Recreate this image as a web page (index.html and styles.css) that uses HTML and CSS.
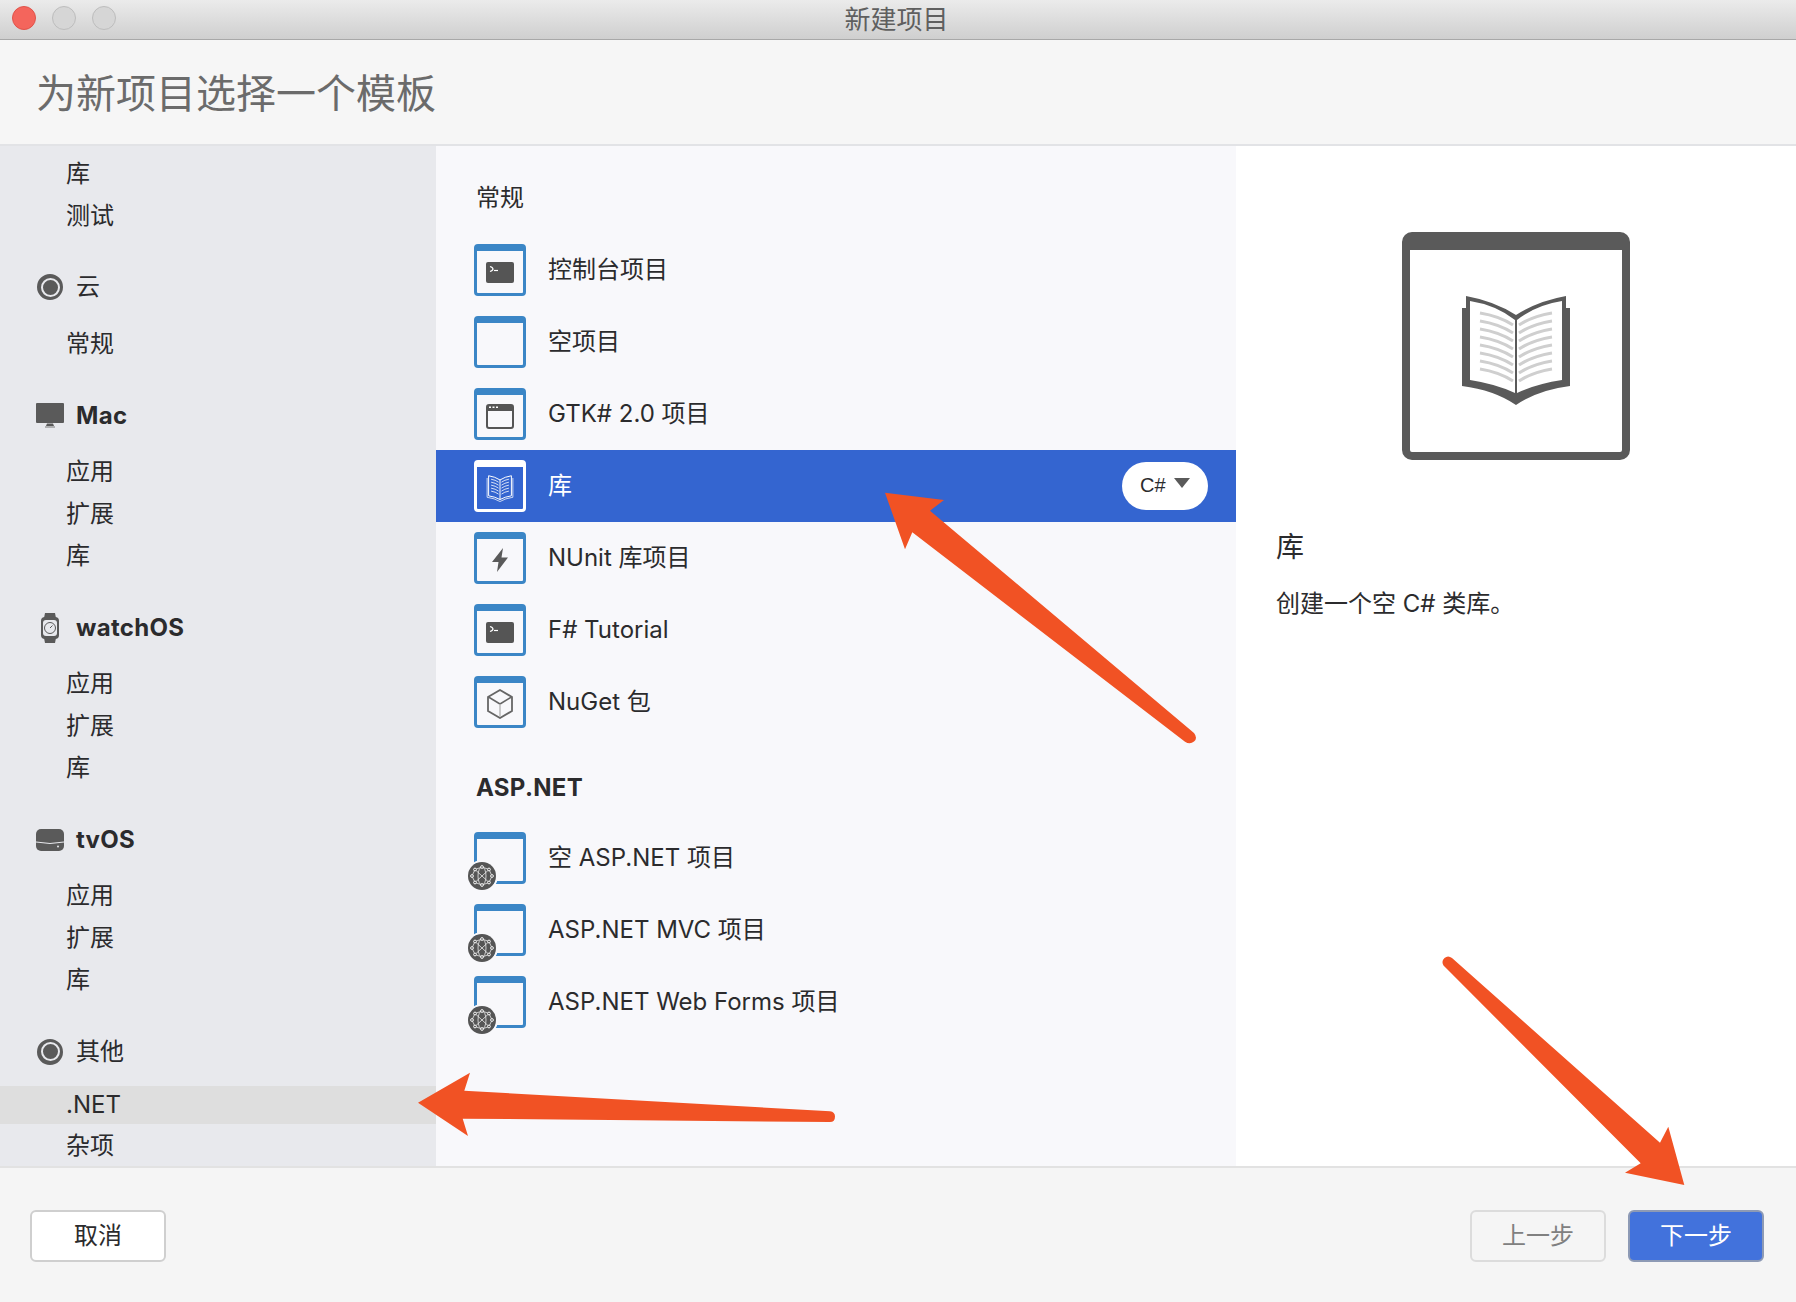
FILE: index.html
```html
<!DOCTYPE html>
<html lang="zh-CN">
   <head>
      <meta http-equiv="Content-Type" content="text/html;charset=utf-8" />
      <title>新建项目</title>
      <link rel="stylesheet" href="styles.css">
   </head>
   <body>
      <div class="titlebar">
         <div class="lights">
            <span class="light red"></span>
            <span class="light"></span>
            <span class="light"></span>
         </div>
         <div class="wintitle">新建项目</div>
      </div>
      <header class="head">为新项目选择一个模板</header>

      <main class="main">
         <nav class="side">
            <div class="items first">
               <div class="item">库</div>
               <div class="item">测试</div>
            </div>

            <div class="cat"><span class="caticon"><span class="ring"></span></span>云</div>
            <div class="items cloud">
               <div class="item">常规</div>
            </div>

            <div class="cat bold">
               <span class="caticon">
                  <svg width="28" height="25" viewBox="0 0 28 25"><path d="M1 0H27a1 1 0 0 1 1 1V19a1 1 0 0 1-1 1H1a1 1 0 0 1-1-1V1a1 1 0 0 1 1-1Z" fill="#5a5a5a"/><path d="M11 20.500H17L18 23H10Z" fill="#5a5a5a"/><path d="M9 23.500H19V24.500H9Z" fill="#777"/></svg>
               </span>Mac
            </div>
            <div class="items">
               <div class="item">应用</div>
               <div class="item">扩展</div>
               <div class="item">库</div>
            </div>

            <div class="cat bold">
               <span class="caticon">
                  <svg width="20" height="30" viewBox="0 0 20 30"><path d="M5 0H15L16 5H4ZM4 25H16L15 30H5Z" fill="#5a5a5a"/><rect x="1" y="4" width="18" height="22" rx="4" fill="#5a5a5a"/><rect x="3" y="7" width="14" height="16" rx="3" fill="#e8e9ed"/><circle cx="10" cy="15" r="5.500" fill="none" stroke="#5a5a5a"/><path d="M10 15L12.500 12.500" stroke="#5a5a5a"/></svg>
               </span>watchOS
            </div>
            <div class="items">
               <div class="item">应用</div>
               <div class="item">扩展</div>
               <div class="item">库</div>
            </div>

            <div class="cat bold">
               <span class="caticon">
                  <svg width="28" height="22" viewBox="0 0 28 22"><rect width="28" height="22" rx="5" fill="#5a5a5a"/><path d="M0 13Q14 16 28 13" fill="none" stroke="#e8e9ed"/><circle cx="22" cy="17.500" r="1" fill="#e8e9ed"/></svg>
               </span>tvOS
            </div>
            <div class="items">
               <div class="item">应用</div>
               <div class="item">扩展</div>
               <div class="item">库</div>
            </div>

            <div class="cat"><span class="caticon"><span class="ring"></span></span>其他</div>
            <div class="items tight">
               <div class="item current">.NET</div>
               <div class="item nogap">杂项</div>
            </div>
         </nav>

         <section class="list">
            <h3 class="listhead">常规</h3>
            <div class="row">
               <span class="tile"><span class="term"><svg width="28" height="21" viewBox="0 0 28 21"><path d="M4 4.500Q7 5.500 7 7T4 9.500" fill="none" stroke="#fff" stroke-width="1.200"/><path d="M8 8.500H12" stroke="#fff" stroke-width="1.200"/></svg></span></span>
               控制台项目
            </div>
            <div class="row"><span class="tile"></span>空项目</div>
            <div class="row">
               <span class="tile">
                  <svg width="28" height="25" viewBox="0 0 28 25"><rect x="1" y="1" width="26" height="23" rx="2" fill="none" stroke="#555" stroke-width="2"/><path d="M1 3a2 2 0 0 1 2-2H25a2 2 0 0 1 2 2V7H1Z" fill="#555"/><path d="M3 3.200H5M6.500 3.200H8.500M10 3.200H12" stroke="#fff" stroke-width="1.500"/></svg>
               </span>
               GTK# 2.0 项目
            </div>
            <div class="row selected">
               <span class="tile">
                  <svg width="28" height="27" viewBox="0 0 108 109" fill="none" stroke="#fff"><path stroke-width="3" d="M2 12V90Q32 94 54 107Q76 94 106 90V12"/><path stroke-width="4" d="M8 3Q34 7 54 20Q74 7 100 3V84Q74 88 54 99Q34 88 8 84ZM54 20V99"/><path stroke-width="4" d="M18 17q18 3 30 12M18 29q18 3 30 12M18 41q18 3 30 12M18 53q18 3 30 12M18 65q18 3 30 12M90 17q-18 3-30 12M90 29q-18 3-30 12M90 41q-18 3-30 12M90 53q-18 3-30 12M90 65q-18 3-30 12" opacity=".8"/></svg>
               </span>
               库
               <span class="pill">C#<span class="caret"></span></span>
            </div>
            <div class="row">
               <span class="tile">
                  <svg width="16" height="24" viewBox="0 0 16 24"><path d="M11 0L0 14H6.500L5 24L16 9.500H9.500Z" fill="#5a5a5a"/></svg>
               </span>
               NUnit 库项目
            </div>
            <div class="row">
               <span class="tile"><span class="term"><svg width="28" height="21" viewBox="0 0 28 21"><path d="M4 4.500Q7 5.500 7 7T4 9.500" fill="none" stroke="#fff" stroke-width="1.200"/><path d="M8 8.500H12" stroke="#fff" stroke-width="1.200"/></svg></span></span>
               F# Tutorial
            </div>
            <div class="row">
               <span class="tile">
                  <svg width="26" height="30" viewBox="0 0 26 30" fill="none"><path d="M13 1L25 8V22L13 29L1 22V8Z" stroke="#666" stroke-width="1.800"/><path d="M1.500 8L13 15L24.500 8" stroke="#666" stroke-width="1.500"/><path d="M13 15V28" stroke="#bbb" stroke-width="1.500"/></svg>
               </span>
               NuGet 包
            </div>

            <h3 class="listhead second bold">ASP.NET</h3>
            <div class="row">
               <span class="tile"><span class="badge"><svg width="28" height="28" viewBox="0 0 28 28"><use href="#net"/></svg></span></span>
               空 ASP.NET 项目
            </div>
            <div class="row">
               <span class="tile"><span class="badge"><svg width="28" height="28" viewBox="0 0 28 28"><use href="#net"/></svg></span></span>
               ASP.NET MVC 项目
            </div>
            <div class="row">
               <span class="tile"><span class="badge"><svg width="28" height="28" viewBox="0 0 28 28"><use href="#net"/></svg></span></span>
               ASP.NET Web Forms 项目
            </div>
         </section>

         <aside class="detail">
            <div class="preview">
               <svg width="108" height="109" viewBox="0 0 108 109">
                  <path fill="#5a5a5a" d="M0 12H4V0Q32 5 54 19Q76 5 104 0V12H108V90Q76 94 54 109Q32 94 0 90Z"/>
                  <path fill="#fff" d="M8 5Q34 9 53 24V97Q34 88 8 84Z"/>
                  <path fill="#fff" d="M100 5Q74 9 55 24V97Q74 88 100 84Z"/>
                  <path fill="none" stroke="#cfcfcf" stroke-width="3" d="M18 17q19 3 33 12M18 25q19 3 33 12M18 33q19 3 33 12M18 41q19 3 33 12M18 49q19 3 33 12M18 57q19 3 33 12M18 65q19 3 33 12M18 73q19 3 33 12"/>
                  <path fill="none" stroke="#cfcfcf" stroke-width="3" d="M90 17q-19 3-33 12M90 25q-19 3-33 12M90 33q-19 3-33 12M90 41q-19 3-33 12M90 49q-19 3-33 12M90 57q-19 3-33 12M90 65q-19 3-33 12M90 73q-19 3-33 12"/>
               </svg>
            </div>
            <div class="dtitle">库</div>
            <div class="ddesc">创建一个空 C# 类库。</div>
         </aside>
      </main>

      <footer class="foot">
         <button class="btn">取消</button>
         <div class="navbtns">
            <button class="btn off">上一步</button>
            <button class="btn primary">下一步</button>
         </div>
      </footer>

      <svg class="marks" width="1796" height="1302" viewBox="0 0 1796 1302">
         <defs>
            <g id="net" fill="none" stroke="#fff" stroke-width=".7">
               <circle cx="14" cy="14" r="14" fill="#555" stroke="none"/>
               <path d="M14 5L21 7.500L24 14L21 20.500L14 23L7 20.500L4 14L7 7.500Z"/>
               <ellipse cx="14" cy="14" rx="4" ry="9"/>
               <path d="M7 7.500Q14 14 21 20.500M21 7.500Q14 14 7 20.500"/>
               <g fill="#555" stroke-width=".9">
                  <circle cx="14" cy="5" r="1.400"/><circle cx="21" cy="7.500" r="1.400"/><circle cx="24" cy="14" r="1.400"/><circle cx="21" cy="20.500" r="1.400"/>
                  <circle cx="14" cy="23" r="1.400"/><circle cx="7" cy="20.500" r="1.400"/><circle cx="4" cy="14" r="1.400"/><circle cx="7" cy="7.500" r="1.400"/>
               </g>
            </g>
         </defs>
         <path class="arrow" d="M885 492.700L944 500L930 510.700L1194 733Q1198 738 1194 741.500Q1190 745 1185 741.700L912.300 532.300L905 549.300Z"/>
         <path class="arrow" d="M418 1102.700L470 1072.700L464.300 1090.700L830 1111.300Q835 1112 835 1116.500Q835 1122 830 1122L462.700 1118.700L468 1136Z"/>
         <path class="arrow" d="M1684.300 1185L1625 1172.700L1640.700 1163.300L1443.500 965.500Q1441 961 1444.500 958Q1448 955 1452 958L1660 1142.700L1668.300 1126.700Z"/>
      </svg>
   </body>
</html>
```

FILE: styles.css
```css
* {box-sizing: border-box;}

html, body {margin: 0; height: 100%;}

body {
   position: relative;
   display: flex;
   flex-direction: column;
   width: 1796px;
   height: 1302px;
   overflow: hidden;
   font-family: "Inter", "Noto Sans CJK SC", sans-serif;
   font-size: 24px;
   color: #2b2b2d;
   background: #f5f5f5;
}

.bold {font-weight: 700; letter-spacing: .3px;}

/* window title */
.titlebar {
   position: relative;
   flex: none;
   height: 40px;
   display: flex;
   align-items: center;
   justify-content: center;
   padding-right: 3px;
   background: linear-gradient(#ebebeb, #cfcfcf);
   border-bottom: 1px solid #a8a8a8;
}
.lights {
   position: absolute;
   left: 12px;
   top: 6px;
   display: flex;
   gap: 16px;
}
.light {
   width: 24px;
   height: 24px;
   border-radius: 50%;
   background: #d6d6d6;
   border: 1px solid #bdbdbd;
}
.light.red {background: #f4655c; border-color: #e0534a;}
.wintitle {font-size: 26px; color: #5f5f5f; line-height: 38px;}

.head {
   flex: none;
   height: 106px;
   padding: 0 0 2px 36px;
   display: flex;
   align-items: center;
   font-size: 40px;
   color: #6b6b6b;
   background: #f6f6f6;
   border-bottom: 2px solid #e2e3e6;
}

.main {flex: none; height: 1020px; display: flex;}

/* left column */
.side {
   flex: none;
   width: 436px;
   overflow: hidden;
   background: #e8e9ed;
   padding-top: 8.6px;
}
.cat {
   display: flex;
   align-items: center;
   height: 38px;
   line-height: 38px;
   margin-top: 33.4px;
   padding-left: 36px;
}
.caticon {
   flex: none;
   width: 28px;
   margin-right: 12px;
   display: flex;
   align-items: center;
   justify-content: center;
}
.caticon svg {display: block;}
.ring {
   width: 26px;
   height: 26px;
   border-radius: 50%;
   border: 6.500px solid #5a5a5a;
   background: #5a5a5a;
   position: relative;
}
.ring::after {
   content: "";
   position: absolute;
   inset: -2.500px;
   border-radius: 50%;
   border: 2.500px solid #e8e9ed;
}
.items {margin-top: 18px;}
.items.first {margin-top: 0;}
.items.cloud {margin-top: 19.2px;}
.items.tight {margin-top: 15px;}
.item {
   height: 38px;
   line-height: 38px;
   padding-left: 66px;
}
.item + .item {margin-top: 4.300px;}
.item.nogap {margin-top: 3px;}
.item.current {background: #dedede;}

/* template list */
.list {
   flex: none;
   width: 800px;
   background: #f8f8fb;
}
.listhead {
   margin: 33px 0 17px;
   height: 38px;
   line-height: 38px;
   padding-left: 40px;
   font-size: 24px;
   font-weight: 400;
}
.listhead.second {margin: 31px 0 15px; font-weight: 700;}
.row {
   height: 72px;
   display: flex;
   align-items: center;
   gap: 22px;
   padding: 0 28px 0 38px;
   line-height: 38px;
}
.row.selected {background: #3465d0; color: #fff;}
.tile {
   position: relative;
   flex: none;
   width: 52px;
   height: 52px;
   display: flex;
   align-items: center;
   justify-content: center;
   border: 3px solid #3b86c6;
   border-top-width: 7px;
   border-radius: 4px;
}
.selected .tile {border-color: #fff;}
.term {
   display: block;
   width: 28px;
   height: 21px;
   border-radius: 2px;
   background: #555;
}
.term svg {display: block;}
.badge {
   position: absolute;
   left: -9px;
   bottom: -9px;
   width: 28px;
   height: 28px;
   border-radius: 50%;
   box-shadow: 0 0 0 2px #f8f8fb;
}
.badge svg {display: block;}
.pill {
   margin-left: auto;
   width: 86px;
   height: 48px;
   display: flex;
   align-items: center;
   padding: 0 0 2px 18px;
   gap: 8px;
   border-radius: 24px;
   background: #fff;
   color: #2b2b2d;
   font-size: 20px;
   font-family: "Liberation Sans", sans-serif;
}
.caret {
   width: 0;
   height: 0;
   margin-top: -4px;
   border-left: 8px solid transparent;
   border-right: 8px solid transparent;
   border-top: 10px solid #5a5a5a;
}

/* right column */
.detail {
   flex: 1;
   background: #fff;
   padding: 86px 0 0 40px;
}
.preview {
   width: 228px;
   height: 228px;
   margin-left: 126px;
   display: flex;
   align-items: center;
   justify-content: center;
   border: 8px solid #5a5a5a;
   border-top-width: 18px;
   border-radius: 10px;
}
.preview svg {display: block; margin-top: -2px;}
.dtitle {margin-top: 68px; font-size: 28px; line-height: 38px;}
.ddesc {margin-top: 20px; line-height: 36px;}

/* bottom buttons */
.foot {
   flex: 1;
   display: flex;
   align-items: flex-start;
   justify-content: space-between;
   padding: 42px 32px 0 30px;
   border-top: 2px solid #e2e2e2;
}
.navbtns {display: flex; gap: 22px;}
.btn {
   width: 136px;
   height: 52px;
   padding: 0;
   font: inherit;
   line-height: 38px;
   color: #2b2b2d;
   background: #fff;
   border: 2px solid #cfcfcf;
   border-radius: 6px;
}
.btn.off {background: #f5f5f5; color: #808080; border-color: #dcdcdc;}
.btn.primary {background: #4272dc; color: #fff; border-color: #8d9ab5;}

/* hand drawn arrows lying over the screenshot */
.marks {position: absolute; left: 0; top: 0; pointer-events: none;}
.arrow {fill: #f15224;}
```
